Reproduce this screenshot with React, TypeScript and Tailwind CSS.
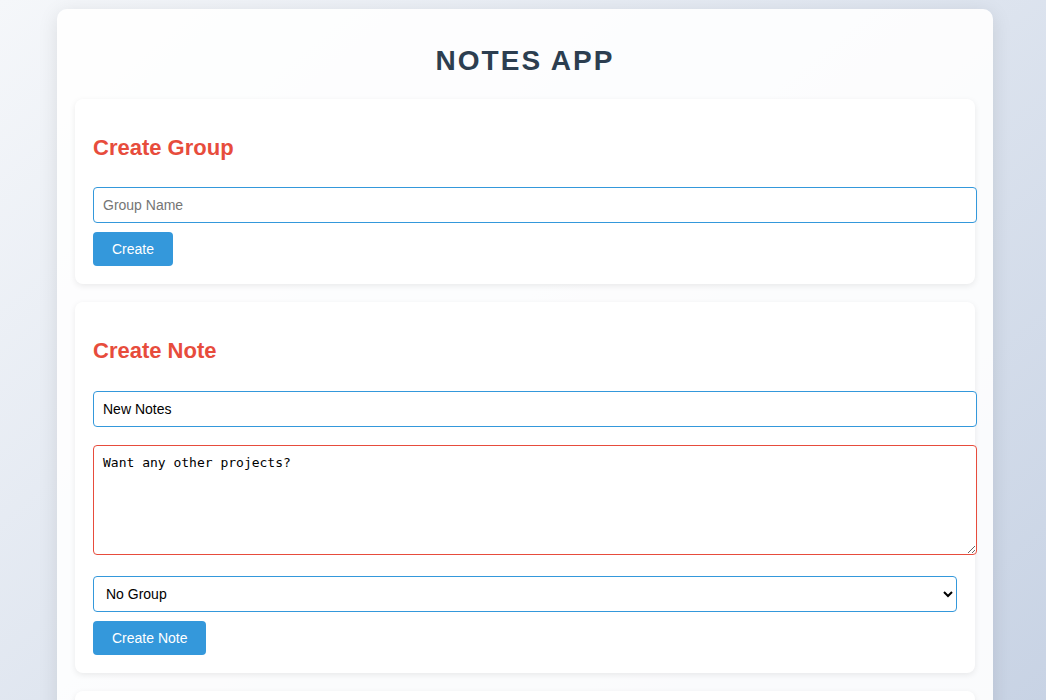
import { useState } from 'react';

export default function App() {
  const [groupName, setGroupName] = useState('');
  const [title, setTitle] = useState('New Notes');
  const [body, setBody] = useState('Want any other projects?');
  const [group, setGroup] = useState('');

  return (
    <div className="min-h-screen bg-gradient-to-br from-[#f5f7fa] to-[#c3cfe2] pt-[9px] pb-10 pl-[4px] font-['Liberation_Sans',Arial,sans-serif]">
      <div className="mx-auto w-[936px] rounded-[10px] bg-white/90 p-[18px] shadow-[0_4px_20px_rgba(0,0,0,0.1)]">
        <h1 className="mt-[18px] mb-[22px] text-center text-[28px] leading-[32px] font-bold tracking-[2px] text-[#2c3e50]">
          NOTES APP
        </h1>

        {/* Create group */}
        <section className="rounded-lg bg-white p-[18px] shadow-[0_2px_6px_rgba(0,0,0,0.08)]">
          <h2 className="mt-[18px] mb-[27px] text-[22px] leading-[25px] font-bold text-[#e74c3c]">Create Group</h2>
          <input
            value={groupName}
            onChange={(e) => setGroupName(e.target.value)}
            placeholder="Group Name"
            className="box-content block w-full rounded border border-[#3498db] bg-white px-[9px] py-[9px] text-[14px] leading-4 text-black placeholder:text-[#757575] outline-none"
          />
          <button className="mt-[9px] rounded bg-[#3498db] px-[19px] py-[9px] text-[14px] leading-4 text-white">
            Create
          </button>
        </section>

        {/* Create note */}
        <section className="mt-[18px] rounded-lg bg-white p-[18px] shadow-[0_2px_6px_rgba(0,0,0,0.08)]">
          <h2 className="mt-[18px] mb-[28px] text-[22px] leading-[25px] font-bold text-[#e74c3c]">Create Note</h2>
          <input
            value={title}
            onChange={(e) => setTitle(e.target.value)}
            className="box-content block w-full rounded border border-[#3498db] bg-white px-[9px] py-[9px] text-[14px] leading-4 text-black outline-none"
          />
          <textarea
            value={body}
            onChange={(e) => setBody(e.target.value)}
            className="mt-[18px] box-content block h-[90px] w-full rounded border border-[#e74c3c] bg-white px-[9px] py-[9px] font-['DejaVu_Sans_Mono',monospace] text-[13px] leading-[15px] text-black outline-none"
          />
          <select
            value={group}
            onChange={(e) => setGroup(e.target.value)}
            className="mt-[21px] block h-9 w-full appearance-auto rounded border border-[#3498db] bg-white pr-[9px] pl-[8px] text-[14px] text-black outline-none"
          >
            <option value="">No Group</option>
          </select>
          <button className="mt-[9px] rounded bg-[#3498db] px-[19px] py-[9px] text-[14px] leading-4 text-white">
            Create Note
          </button>
        </section>

        {/* Notes list */}
        <section className="mt-[18px] rounded-lg bg-white p-[18px] shadow-[0_2px_6px_rgba(0,0,0,0.08)]">
          <h2 className="mt-[18px] mb-[27px] text-[22px] leading-[25px] font-bold text-[#e74c3c]">Notes</h2>
          <p className="text-[14px] text-[#555]">No notes yet.</p>
        </section>
      </div>
    </div>
  );
}
